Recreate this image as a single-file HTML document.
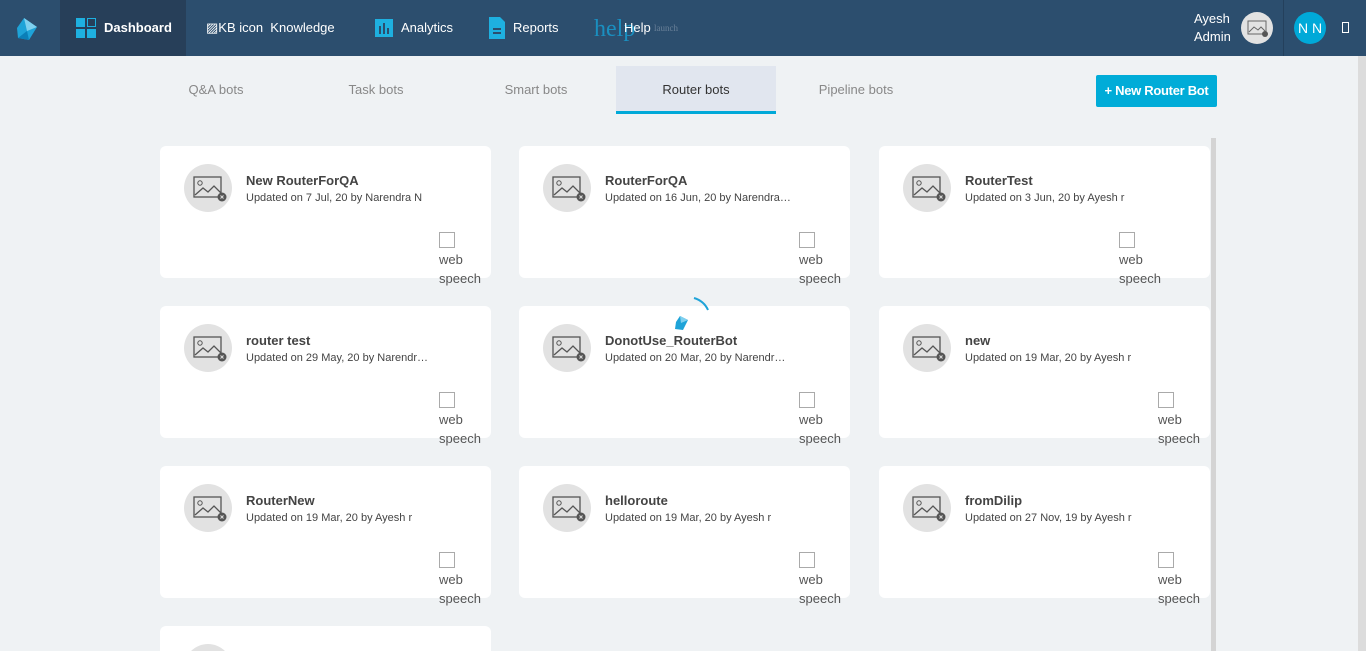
<!DOCTYPE html>
<html style="overflow:hidden;height:651px"><head><style>
*{box-sizing:border-box;margin:0;padding:0}
body{width:1366px;height:651px;overflow:hidden;background:#eff2f4;font-family:"Liberation Sans",Arial,sans-serif;position:relative}
.nav{position:absolute;left:0;top:0;width:1366px;height:56px;background:#2c4e6e;color:#fff;font-size:13px}
.nav .it{position:absolute;top:0;height:56px;line-height:56px}
.tab{position:absolute;top:66px;height:48px;width:160px;text-align:center;line-height:48px;font-size:13px;color:#888}
.card{position:absolute;width:331px;height:132px;background:#fff;border-radius:6px}
.av{position:absolute;left:24px;top:18px;width:48px;height:48px;border-radius:50%;background:#e2e2e2}
.t{position:absolute;left:86px;top:27px;font-size:13px;font-weight:bold;color:#444}
.s{position:absolute;left:86px;top:46px;font-size:11px;color:#444;white-space:nowrap}
.cb{position:absolute;top:86px;font-size:13px;color:#555;line-height:19px}
.cb i{display:block;width:16px;height:16px;border:1px solid #aaa;background:#fff;margin-bottom:2px}
</style></head><body>
<div class="nav">
 <svg style="position:absolute;left:15px;top:16px" width="26" height="26" viewBox="0 0 26 26"><polygon points="9,2 22,11 14,24 3,22 2,12" fill="#1ea3d8"/><polygon points="9,2 22,11 12,15" fill="#7fd0ef"/><polygon points="3,22 12,15 14,24" fill="#0b7fb8"/></svg>
 <div class="it" style="left:60px;width:126px;background:#273f59"></div>
 <svg style="position:absolute;left:76px;top:18px" width="20" height="20"><rect x="0" y="0" width="9" height="9" fill="#1eb0e0"/><rect x="11.5" y="0.5" width="8" height="8" fill="none" stroke="#1eb0e0"/><rect x="0" y="11" width="9" height="9" fill="#1eb0e0"/><rect x="11" y="11" width="9" height="9" fill="#1eb0e0"/></svg>
 <div class="it" style="left:104px;font-weight:bold">Dashboard</div>
 <div class="it" style="left:206px">▨KB icon&nbsp; Knowledge</div>
 <svg style="position:absolute;left:375px;top:19px" width="18" height="18"><rect width="18" height="18" fill="#1eb0e0"/><rect x="4" y="7" width="2" height="8" fill="#2c4e6e"/><rect x="8" y="4" width="2" height="11" fill="#2c4e6e"/><rect x="12" y="9" width="2" height="6" fill="#2c4e6e"/></svg>
 <div class="it" style="left:401px">Analytics</div>
 <svg style="position:absolute;left:489px;top:17px" width="16" height="22"><path d="M0 0H11L16 5V22H0Z" fill="#1eb0e0"/><rect x="4" y="11" width="8" height="2" fill="#2c4e6e"/><rect x="4" y="15" width="8" height="2" fill="#2c4e6e"/></svg>
 <div class="it" style="left:513px">Reports</div>
 <div class="it" style="left:594px;font-family:'Liberation Serif',serif;font-size:24px;color:#1a8fc0;line-height:58px">help</div>
 <div class="it" style="left:624px">Help</div>
 <div class="it" style="left:654px;font-family:'Liberation Serif',serif;font-size:9px;color:#6a8098">launch</div>
 <div style="position:absolute;left:1194px;top:10px;font-size:13px;line-height:18px">Ayesh<br>Admin</div>
 <div style="position:absolute;left:1241px;top:12px;width:32px;height:32px;border-radius:50%;background:#e2e2e2"><svg width="32" height="32"><rect x="7" y="9" width="18" height="13" fill="none" stroke="#666"/><path d="M8 20l5-5 4 3 3-3 4 4" stroke="#666" fill="none"/><circle cx="24" cy="22" r="3" fill="#555"/></svg></div>
 <div style="position:absolute;left:1283px;top:0;width:1px;height:56px;background:#24405c"></div>
 <div style="position:absolute;left:1294px;top:12px;width:32px;height:32px;border-radius:50%;background:#00a9d8;text-align:center;line-height:32px;font-size:14px">N N</div>
 <div style="position:absolute;left:1342px;top:22px;width:7px;height:11px;border:1px solid #fff"></div>
</div>
<div class="tab" style="left:136px">Q&amp;A bots</div>
<div class="tab" style="left:296px">Task bots</div>
<div class="tab" style="left:456px">Smart bots</div>
<div class="tab" style="left:616px;background:#e1e6ef;color:#333;border-bottom:3px solid #00a9d8">Router bots</div>
<div class="tab" style="left:776px">Pipeline bots</div>
<div style="position:absolute;left:1096px;top:75px;width:121px;height:32px;background:#00acd8;border-radius:2px;color:#fff;font-size:13px;font-weight:bold;text-align:center;line-height:32px;letter-spacing:-0.3px">+ New Router Bot</div>
<div style="position:absolute;left:1211px;top:138px;width:5px;height:513px;background:#d4d4d4"></div>
<div style="position:absolute;left:1358px;top:56px;width:8px;height:595px;background:#dcdcdc"></div>
<div id="cards"></div>
<script>
var d=[[160,146,"New RouterForQA","Updated on 7 Jul, 20 by Narendra N",279],
[519,146,"RouterForQA","Updated on 16 Jun, 20 by Narendra…",280],
[879,146,"RouterTest","Updated on 3 Jun, 20 by Ayesh r",240],
[160,306,"router test","Updated on 29 May, 20 by Narendr…",279],
[519,306,"DonotUse_RouterBot","Updated on 20 Mar, 20 by Narendr…",280],
[879,306,"new","Updated on 19 Mar, 20 by Ayesh r",279],
[160,466,"RouterNew","Updated on 19 Mar, 20 by Ayesh r",279],
[519,466,"helloroute","Updated on 19 Mar, 20 by Ayesh r",280],
[879,466,"fromDilip","Updated on 27 Nov, 19 by Ayesh r",279],
[160,626,"","",0]];
var av='<div class="av"><svg width="48" height="48"><rect x="10" y="13" width="27" height="20" fill="none" stroke="#555" stroke-width="1.3"/><circle cx="16" cy="19" r="2.2" fill="none" stroke="#555"/><path d="M11 31l8-7 5 4 6-6 7 7" fill="none" stroke="#555" stroke-width="1.3"/><circle cx="38" cy="33" r="4.5" fill="#555"/><path d="M36.5 31.5l3 3M39.5 31.5l-3 3" stroke="#ddd"/></svg></div>';
var h='';d.forEach(function(c){h+='<div class="card" style="left:'+c[0]+'px;top:'+c[1]+'px">'+av+(c[2]?'<div class="t">'+c[2]+'</div><div class="s">'+c[3]+'</div><div class="cb" style="left:'+c[4]+'px"><i></i>web<br>speech</div>':'')+'</div>'});
document.getElementById('cards').innerHTML=h;
</script>
<svg style="position:absolute;left:672px;top:296px" width="40" height="40"><path d="M22 2 Q32 5 36 14" stroke="#1ea3d8" stroke-width="2" fill="none"/><polygon points="8,20 16,24 11,34 3,33 4,26" fill="#1ea3d8"/><polygon points="8,20 16,24 9,27" fill="#7fd0ef"/></svg>
</body></html>
